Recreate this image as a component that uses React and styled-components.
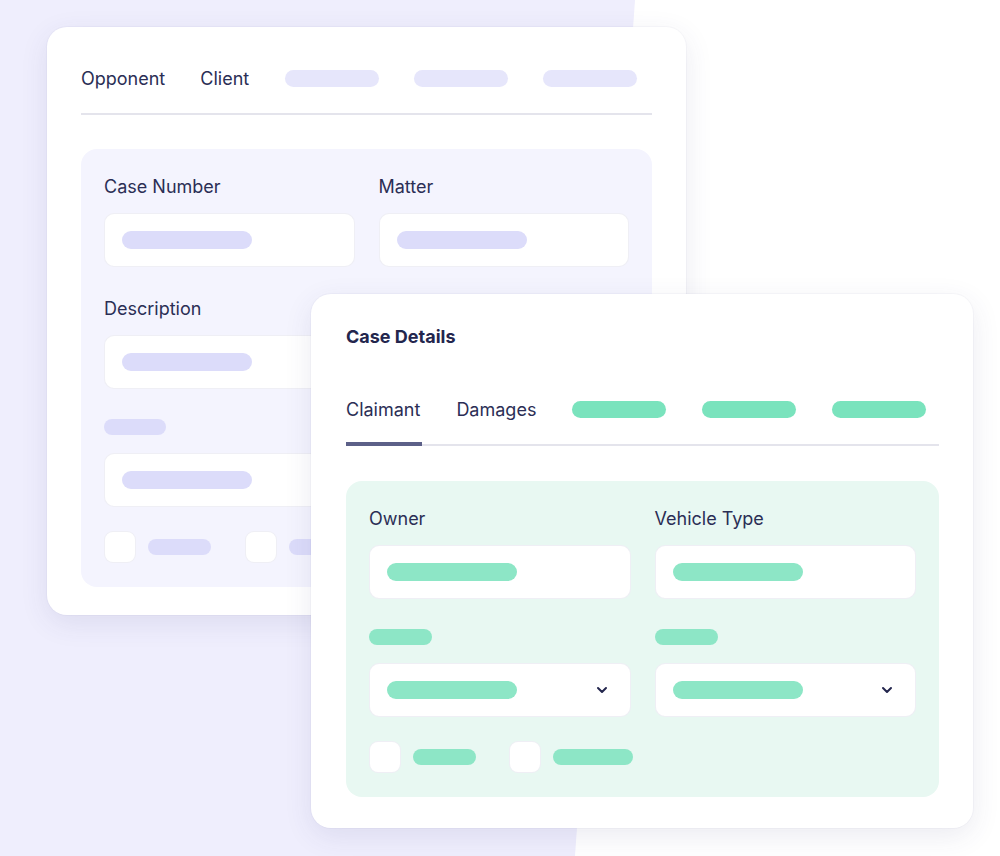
import React from 'react';
import styled, { createGlobalStyle } from 'styled-components';

const GlobalStyle = createGlobalStyle`
  html, body { margin: 0; padding: 0; background: #ffffff; }
  body { font-family: Inter, "Noto Sans", sans-serif; color: #2b2e55; }
`;

const themes = {
  purple: { panel: '#f4f4fe', pill: '#dcdcfa', tabPill: '#e6e6fb' },
  green: { panel: '#e8f8f2', pill: '#8de6c6', tabPill: '#7ae3bd' },
};

// Canvas with the lavender backdrop
const Canvas = styled.div`
  position: relative;
  width: 1000px;
  height: 856px;
  overflow: hidden;
  background: #ffffff;
`;

const Backdrop = styled.div`
  position: absolute;
  inset: 0;
  background: #efeefd;
  clip-path: polygon(0 0, 635px 0, 575px 856px, 0 856px);
`;

const Card = styled.div`
  position: absolute;
  left: ${p => p.$x}px;
  top: ${p => p.$y}px;
  width: ${p => p.$w}px;
  height: ${p => p.$h}px;
  box-sizing: border-box;
  background: #ffffff;
  border-radius: 20px;
  box-shadow: 0 8px 28px rgba(60, 60, 120, 0.1), 0 0 0 1px rgba(60, 60, 120, 0.03);
  padding: ${p => p.$pad};
  display: flex;
  flex-direction: column;
`;

const Title = styled.div`
  font-size: 18px;
  font-weight: 700;
  color: #23264d;
  margin-bottom: 45px;
`;

const Tabs = styled.div`
  display: flex;
  align-items: center;
  height: 34px;
  border-bottom: 2px solid #e4e4ec;
  padding-bottom: 18px;
  position: relative;
`;

const Tab = styled.div`
  font-size: 18px;
  margin-right: ${p => p.$gap}px;
  position: relative;
  height: 34px;
  display: flex;
  align-items: center;
  ${p => p.$active && `
    &::after {
      content: '';
      position: absolute;
      left: 0;
      right: -2px;
      bottom: -20px;
      height: 4px;
      border-top: 2px solid #5c6088;
      border-bottom: 2px solid #5c6088;
      box-sizing: border-box;
    }
  `}
`;

const Pill = styled.div`
  width: ${p => p.$w}px;
  height: ${p => p.$h}px;
  border-radius: 10px;
  background: ${p => p.$c};
  margin-right: ${p => p.$mr || 0}px;
  flex-shrink: 0;
`;

const Panel = styled.div`
  margin-top: ${p => p.$mt}px;
  background: ${p => p.$bg};
  border-radius: 16px;
  padding: 24px 23px;
  flex: 1;
  display: grid;
  grid-template-columns: 1fr 1fr;
  column-gap: 24px;
  align-content: start;
`;

const Field = styled.div`
  display: flex;
  flex-direction: column;
  margin-bottom: ${p => p.$mb}px;
`;

const Label = styled.div`
  font-size: 18px;
  line-height: 28px;
  height: 28px;
  margin-bottom: 12px;
  display: flex;
  align-items: center;
`;

const Input = styled.div`
  height: 54px;
  box-sizing: border-box;
  background: #ffffff;
  border: 1px solid rgba(120, 120, 170, 0.12);
  border-radius: 10px;
  display: flex;
  align-items: center;
  justify-content: space-between;
  padding: 0 22px 0 17px;
`;

const Checks = styled.div`
  grid-column: 1 / -1;
  display: flex;
  align-items: center;
`;

const Box = styled.div`
  width: 32px;
  height: 32px;
  box-sizing: border-box;
  background: #ffffff;
  border: 1px solid rgba(120, 120, 170, 0.12);
  border-radius: 9px;
  margin-right: 12px;
`;

const Chevron = () => (
  <svg width="12" height="8" viewBox="0 0 12 8" fill="none" stroke="#23264d" strokeWidth="2" strokeLinecap="round" strokeLinejoin="round">
    <path d="M2 2l4 4 4-4" />
  </svg>
);

const TextInput = ({ t, select }) => (
  <Input>
    <Pill $w={130} $h={18} $c={t.pill} />
    {select && <Chevron />}
  </Input>
);

export default function App() {
  const p = themes.purple;
  const g = themes.green;
  return (
    <Canvas>
      <GlobalStyle />
      <Backdrop />

      <Card $x={47} $y={27} $w={639} $h={588} $pad="34px 34px 35px 34px">
        <Tabs>
          <Tab $gap={35}>Opponent</Tab>
          <Tab $gap={36}>Client</Tab>
          <Pill $w={94} $h={17} $c={p.tabPill} $mr={35} />
          <Pill $w={94} $h={17} $c={p.tabPill} $mr={35} />
          <Pill $w={94} $h={17} $c={p.tabPill} />
        </Tabs>
        <Panel $mt={34} $bg={p.panel}>
          <Field $mb={28}>
            <Label>Case Number</Label>
            <TextInput t={p} />
          </Field>
          <Field $mb={28}>
            <Label>Matter</Label>
            <TextInput t={p} />
          </Field>
          <Field $mb={24}>
            <Label>Description</Label>
            <TextInput t={p} />
          </Field>
          <div />
          <Field $mb={24}>
            <Label><Pill $w={62} $h={16} $c={p.pill} /></Label>
            <TextInput t={p} />
          </Field>
          <div />
          <Checks>
            <Box />
            <Pill $w={63} $h={16} $c={p.pill} $mr={34} />
            <Box />
            <Pill $w={63} $h={16} $c={p.pill} />
          </Checks>
        </Panel>
      </Card>

      <Card $x={311} $y={294} $w={662} $h={534} $pad="32px 34px 35px 35px">
        <Title>Case Details</Title>
        <Tabs>
          <Tab $gap={36} $active>Claimant</Tab>
          <Tab $gap={36}>Damages</Tab>
          <Pill $w={94} $h={17} $c={g.tabPill} $mr={36} />
          <Pill $w={94} $h={17} $c={g.tabPill} $mr={36} />
          <Pill $w={94} $h={17} $c={g.tabPill} />
        </Tabs>
        <Panel $mt={35} $bg={g.panel}>
          <Field $mb={24}>
            <Label>Owner</Label>
            <TextInput t={g} />
          </Field>
          <Field $mb={24}>
            <Label>Vehicle Type</Label>
            <TextInput t={g} />
          </Field>
          <Field $mb={24}>
            <Label><Pill $w={63} $h={16} $c={g.pill} /></Label>
            <TextInput t={g} select />
          </Field>
          <Field $mb={24}>
            <Label><Pill $w={63} $h={16} $c={g.pill} /></Label>
            <TextInput t={g} select />
          </Field>
          <Checks>
            <Box />
            <Pill $w={63} $h={16} $c={g.pill} $mr={33} />
            <Box />
            <Pill $w={80} $h={16} $c={g.pill} />
          </Checks>
        </Panel>
      </Card>
    </Canvas>
  );
}
